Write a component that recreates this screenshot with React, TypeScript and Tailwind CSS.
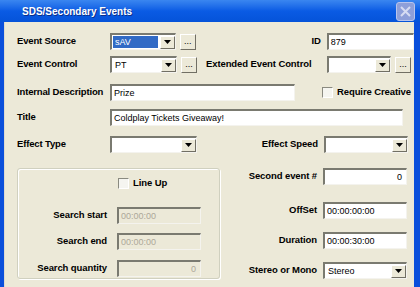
import React from 'react';

const font = { fontFamily: '"Liberation Sans", Arial, sans-serif' };

// sunken classic 3D edit box
const Edit = ({ w, value = '', right = false, disabled = false }: {
  w: string; value?: string; right?: boolean; disabled?: boolean;
}) => (
  <div
    className={`${w} h-[17px] border-t-2 border-l-2 border-t-[#7a7a70] border-l-[#7a7a70] border-b border-r border-b-[#f4f3ee] border-r-[#f4f3ee] ${
      disabled ? 'bg-[#ECE9D8] text-[#ACA899]' : 'bg-white text-black'
    } flex items-center px-[2px] text-[9px] leading-none whitespace-nowrap ${right ? 'justify-end pr-[4px]' : ''}`}
  >
    <span>{value}</span>
  </div>
);

const Arrow = () => (
  <div className="w-[15px] h-[13px] bg-[#ECE9D8] border-t border-l border-t-white border-l-white border-b border-r border-b-[#716F64] border-r-[#716F64] flex items-center justify-center shrink-0">
    <svg width="7" height="4" viewBox="0 0 7 4">
      <path d="M0 0h7L3.5 4z" fill="#000" />
    </svg>
  </div>
);

const Combo = ({ w, value = '', selected = false }: { w: string; value?: string; selected?: boolean }) => (
  <div
    className={`${w} h-[17px] border-t-2 border-l-2 border-t-[#7a7a70] border-l-[#7a7a70] border-b border-r border-b-[#f4f3ee] border-r-[#f4f3ee] bg-white flex items-center text-[9px] leading-none whitespace-nowrap`}
  >
    <div className="flex-1 h-full flex items-center pl-[1px] pr-[2px]">
      {selected ? (
        <div className="w-full h-[12px] bg-[#316AC5] text-white flex items-center px-[2px]">{value}</div>
      ) : (
        <span className="px-[2px]">{value}</span>
      )}
    </div>
    <Arrow />
  </div>
);

const Dots = () => (
  <div className="w-[16px] h-[16px] bg-[#ECE9D8] border-t border-l border-t-white border-l-white border-b border-r border-b-[#716F64] border-r-[#716F64] flex items-end justify-center pb-[3px] text-[9px] leading-none shrink-0">
    ...
  </div>
);

const Check = ({ label }: { label: string }) => (
  <div className="flex items-center gap-[4px] whitespace-nowrap">
    <div className="w-[11px] h-[11px] border-t border-l border-t-[#8a8a80] border-l-[#8a8a80] border-b border-r border-b-white border-r-white bg-[#f5f5f0]" />
    <span className="font-bold text-[9.5px] tracking-[-0.1px]">{label}</span>
  </div>
);

const Label = ({ children, w }: { children: React.ReactNode; w: string }) => (
  <div className={`${w} font-bold text-[9.5px] tracking-[-0.15px] whitespace-nowrap shrink-0`}>{children}</div>
);

const RLabel = ({ children, w, pr = 'pr-[6px]' }: { children: React.ReactNode; w: string; pr?: string }) => (
  <div className={`${w} font-bold text-[9.5px] tracking-[-0.1px] text-right ${pr} whitespace-nowrap shrink-0`}>{children}</div>
);

export default function App() {
  return (
    <div className="w-[420px] h-[287px] overflow-hidden bg-[#0A4FDB] flex flex-col text-black" style={font}>
      {/* title bar */}
      <div className="h-[22px] shrink-0 bg-gradient-to-b from-[#3A86F0] via-[#0A5BE4] to-[#0553D9] flex items-center justify-between pl-[22px] pr-[5px]">
        <span className="text-white font-bold text-[10px] [text-shadow:1px_1px_0_#0B2F8A]">SDS/Secondary Events</span>
        <div className="w-[19px] h-[19px] rounded-[3px] bg-[#8E9FD9] border border-[#B8C4EC] flex items-center justify-center">
          <svg width="11" height="11" viewBox="0 0 11 11">
            <path d="M1 1L10 10M10 1L1 10" stroke="#D6DCF2" strokeWidth="2" />
          </svg>
        </div>
      </div>

      {/* client area */}
      <div className="flex-1 ml-[4px] mr-[6px] bg-[#ECE9D8] border-l border-l-[#dcdad0] flex flex-col pl-[12px] pt-[11px]">
        {/* Event Source */}
        <div className="flex items-center h-[17px]">
          <Label w="w-[93px]">Event Source</Label>
          <Combo w="w-[67px]" value="sAV" selected />
          <div className="ml-[4px]"><Dots /></div>
          <RLabel w="w-[131px]">ID</RLabel>
          <Edit w="w-[89px]" value="879" />
        </div>

        {/* Event Control */}
        <div className="flex items-center h-[17px] mt-[6px]">
          <Label w="w-[93px]">Event Control</Label>
          <Combo w="w-[67px]" value="PT" />
          <div className="ml-[4px]"><Dots /></div>
          <div className="w-[130px] pl-[9px] font-bold text-[9.5px] tracking-[-0.1px] whitespace-nowrap shrink-0">Extended Event Control</div>
          <Combo w="w-[64px]" />
          <div className="ml-[4px]"><Dots /></div>
        </div>

        {/* Internal Description */}
        <div className="flex items-center h-[17px] mt-[11px]">
          <Label w="w-[93px]">Internal Description</Label>
          <Edit w="w-[185px]" value="Prize" />
          <div className="ml-[27px]"><Check label="Require Creative" /></div>
        </div>

        {/* Title */}
        <div className="flex items-center h-[17px] mt-[8px]">
          <Label w="w-[93px]">Title</Label>
          <Edit w="w-[293px]" value="Coldplay Tickets Giveaway!" />
        </div>

        {/* Effect */}
        <div className="flex items-center h-[17px] mt-[10px]">
          <Label w="w-[93px]">Effect Type</Label>
          <Combo w="w-[87px]" />
          <RLabel w="w-[127px]">Effect Speed</RLabel>
          <Combo w="w-[84px]" />
        </div>

        {/* lower section */}
        <div className="flex mt-[15px]">
          <div className="w-[203px] h-[111px] border border-[#D0D0BF] rounded-[3px] shadow-[inset_1px_1px_0_#fff,1px_1px_0_#fff] flex flex-col pt-[7px]">
            <div className="flex h-[14px] pl-[100px]">
              <Check label="Line Up" />
            </div>
            <div className="flex items-center h-[17px] mt-[17px]">
              <RLabel w="w-[99px]" pr="pr-[10px]">Search start</RLabel>
              <Edit w="w-[84px]" value="00:00:00" disabled />
            </div>
            <div className="flex items-center h-[17px] mt-[9px]">
              <RLabel w="w-[99px]" pr="pr-[10px]">Search end</RLabel>
              <Edit w="w-[84px]" value="00:00:00" disabled />
            </div>
            <div className="flex items-center h-[17px] mt-[10px]">
              <RLabel w="w-[99px]" pr="pr-[10px]">Search quantity</RLabel>
              <Edit w="w-[84px]" value="0" right disabled />
            </div>
          </div>

          <div className="flex flex-col">
            <div className="flex items-center h-[17px]">
              <RLabel w="w-[103px]">Second event #</RLabel>
              <Edit w="w-[84px]" value="0" right />
            </div>
            <div className="flex items-center h-[17px] mt-[17px]">
              <RLabel w="w-[103px]">OffSet</RLabel>
              <Edit w="w-[84px]" value="00:00:00:00" />
            </div>
            <div className="flex items-center h-[17px] mt-[13px]">
              <RLabel w="w-[103px]">Duration</RLabel>
              <Edit w="w-[84px]" value="00:00:30:00" />
            </div>
            <div className="flex items-center h-[17px] mt-[13px]">
              <RLabel w="w-[103px]">Stereo or Mono</RLabel>
              <Combo w="w-[84px]" value="Stereo" />
            </div>
          </div>
        </div>
      </div>
    </div>
  );
}
